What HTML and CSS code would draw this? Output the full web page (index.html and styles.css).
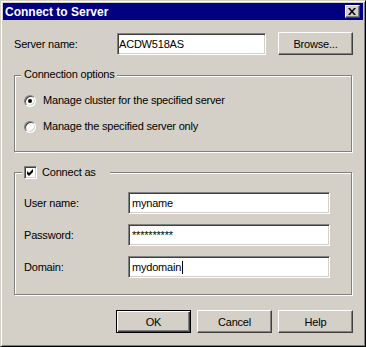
FILE: index.html
```html
<!DOCTYPE html>
<html>
<head>
<meta charset="utf-8">
<title>Connect to Server</title>
<link rel="stylesheet" href="styles.css">
</head>
<body>
<div class="window">
  <div class="titlebar">
    <span class="title">Connect to Server</span>
    <span class="close-btn"><svg width="8" height="7" viewBox="0 0 8 7"><path d="M0 0h2l2 2.4 2-2.4h2l-3 3.5 3 3.5h-2l-2-2.4-2 2.4h-2l3-3.5z" fill="#000"/></svg></span>
  </div>
  <div class="content">
    <div class="server-row">
      <span class="server-label">Server name:</span>
      <div class="field server-field">ACDW518AS</div>
      <button class="btn browse-btn">Browse...</button>
    </div>

    <div class="group group-options">
      <div class="group-title">Connection options</div>
      <div class="option"><span class="radio checked"></span><span>Manage cluster for the specified server</span></div>
      <div class="option"><span class="radio"></span><span>Manage the specified server only</span></div>
    </div>

    <div class="group group-connect">
      <div class="group-title group-title-check"><span class="checkbox"><svg width="11" height="11" viewBox="0 0 11 11"><path d="M2 4 L4 6 L8 2 L8 5 L4 9 L2 7 Z" fill="#000"/></svg></span><span>Connect as</span></div>
      <div class="field-row first"><span class="field-label">User name:</span><div class="field wide-field">myname</div></div>
      <div class="field-row"><span class="field-label">Password:</span><div class="field wide-field">**********</div></div>
      <div class="field-row"><span class="field-label">Domain:</span><div class="field wide-field">mydomain<span class="caret"></span></div></div>
    </div>

    <div class="actions">
      <button class="btn btn-default">OK</button>
      <button class="btn">Cancel</button>
      <button class="btn">Help</button>
    </div>
  </div>
</div>
</body>
</html>
```
FILE: styles.css
```css
html, body {
  margin: 0;
  padding: 0;
  background: #d4d0c8;
}
body {
  font-family: "Liberation Sans", Arial, sans-serif;
  font-size: 11px;
  letter-spacing: -0.2px;
  color: #000;
}
.window {
  box-sizing: border-box;
  width: 366px;
  height: 347px;
  background: #d4d0c8;
  border: 1px solid;
  border-color: #d4d0c8 #000 #000 #d4d0c8;
  box-shadow: inset 1px 1px 0 #fff, inset -1px -1px 0 #808080;
  padding: 2px;
  display: flex;
  flex-direction: column;
}
.titlebar {
  height: 17px;
  flex: none;
  background: #000080;
  color: #fff;
  display: flex;
  align-items: center;
  justify-content: space-between;
  padding: 0 3px 0 2px;
}
.title {
  font-weight: bold;
  font-size: 12px;
  letter-spacing: 0;
}
.close-btn {
  box-sizing: border-box;
  width: 15px;
  height: 13px;
  background: #d4d0c8;
  border: 1px solid;
  border-color: #fff #404040 #404040 #fff;
  box-shadow: inset -1px -1px 0 #808080;
  display: flex;
  align-items: center;
  justify-content: center;
  padding: 0 1px 1px 0;
}
.close-btn svg {
  display: block;
}
.content {
  flex: 1;
  display: flex;
  flex-direction: column;
  padding: 12px 10px 0 11px;
}
.server-row {
  display: flex;
  align-items: center;
  height: 23px;
}
.server-label {
  width: 103px;
  padding-top: 1px;
}
.field {
  box-sizing: border-box;
  height: 22px;
  background: #fff;
  border: 1px solid;
  border-color: #808080 #fff #fff #808080;
  box-shadow: inset 1px 1px 0 #404040, inset -1px -1px 0 #d4d0c8;
  padding: 0 2px;
  display: flex;
  align-items: center;
  white-space: nowrap;
}
.server-field {
  width: 149px;
  align-self: flex-end;
  padding-left: 1px;
}
.btn {
  box-sizing: border-box;
  width: 75px;
  height: 23px;
  margin: 0;
  padding: 0;
  background: #d4d0c8;
  border: 1px solid;
  border-color: #fff #404040 #404040 #fff;
  box-shadow: inset -1px -1px 0 #808080;
  font-family: inherit;
  font-size: 11px;
  letter-spacing: -0.2px;
  color: #000;
  display: flex;
  align-items: center;
  justify-content: center;
}
.browse-btn {
  margin-left: 12px;
}
.btn-default {
  border-color: #000;
  box-shadow: inset 1px 1px 0 #fff, inset -1px -1px 0 #404040, inset -2px -2px 0 #808080;
}
.group {
  box-sizing: border-box;
  width: 338px;
  border: 1px solid #808080;
  box-shadow: 1px 1px 0 #fff, inset 1px 1px 0 #fff;
  display: flex;
  flex-direction: column;
  padding-left: 9px;
}
.group-options {
  margin-top: 20px;
  padding-bottom: 18px;
}
.group-connect {
  margin-top: 20px;
  padding-bottom: 16px;
}
.group-title {
  align-self: flex-start;
  height: 13px;
  line-height: 13px;
  margin: -8px 0 0 -3px;
  padding: 0 2px 0 3px;
  background: #d4d0c8;
  display: flex;
  align-items: center;
}
.group-title-check {
  box-sizing: border-box;
  width: 88px;
  margin: -7px 0 0 -2px;
  padding-left: 2px;
  gap: 5px;
}
.option {
  display: flex;
  align-items: center;
  height: 13px;
  line-height: 13px;
  margin-top: 13px;
  gap: 7px;
}
.radio {
  box-sizing: border-box;
  width: 12px;
  height: 12px;
  border-radius: 50%;
  background: #fff;
  border: 1px solid;
  border-color: #808080 #fff #fff #808080;
  box-shadow: inset 1px 1px 0 #404040, inset -1px -1px 0 #d4d0c8;
  display: flex;
  align-items: center;
  justify-content: center;
  flex: none;
}
.radio.checked::after {
  content: "";
  width: 4px;
  height: 4px;
  border-radius: 50%;
  background: #000;
}
.checkbox {
  box-sizing: border-box;
  width: 13px;
  height: 13px;
  background: #fff;
  border: 1px solid;
  border-color: #808080 #fff #fff #808080;
  box-shadow: inset 1px 1px 0 #404040, inset -1px -1px 0 #d4d0c8;
  display: flex;
  align-items: center;
  justify-content: center;
  flex: none;
}
.checkbox svg {
  display: block;
}
.field-row {
  display: flex;
  align-items: center;
  margin-top: 10px;
}
.field-row.first {
  margin-top: 13px;
}
.field-label {
  width: 104px;
}
.wide-field {
  width: 202px;
  padding-left: 3px;
}
.caret {
  display: inline-block;
  width: 1px;
  height: 13px;
  background: #000;
  margin-left: 1px;
}
.actions {
  display: flex;
  justify-content: flex-end;
  gap: 6px;
  margin-top: 15px;
}
```
